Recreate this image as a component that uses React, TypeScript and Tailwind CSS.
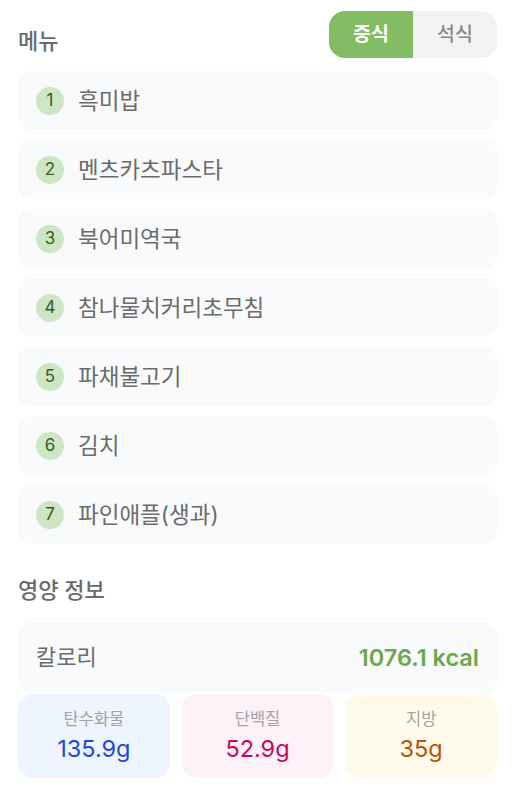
import React from "react";

const menus = ["흑미밥", "멘츠카츠파스타", "북어미역국", "참나물치커리초무침", "파채불고기", "김치", "파인애플(생과)"];

export default function App() {
  return (
    <div
      className="w-[517px] min-h-[792px] bg-white pl-[18px] pr-[20px] pt-[11px]"
      style={{ fontFamily: '"Inter", "Noto Sans CJK KR", sans-serif' }}
    >
      <div className="flex items-end justify-between">
        <div className="text-[22px] leading-[33px] font-medium text-[#6b6b6b]">메뉴</div>
        <div className="flex h-[47px] w-[168px] overflow-hidden rounded-[16px] bg-[#f2f3f5]">
          <div className="flex w-[84px] items-center justify-center bg-[#83bd63] text-[19.5px] font-semibold text-white">중식</div>
          <div className="flex w-[84px] items-center justify-center text-[19.5px] font-medium text-[#8a8a8a]">석식</div>
        </div>
      </div>
      <div className="mt-[13px] flex flex-col gap-[10px]">
        {menus.map((m, i) => (
          <div key={i} className="flex h-[59px] items-center rounded-[12px] bg-[#f9fafb] pl-[18px]">
            <div className="flex h-[28px] w-[28px] items-center justify-center rounded-full bg-[#cde6c3] text-[17px] text-[#3d5a2a]">
              {i + 1}
            </div>
            <div className="ml-[14px] text-[22.5px] text-[#6b6b6b]">{m}</div>
          </div>
        ))}
      </div>
      <div className="mt-[30px] text-[22px] leading-[33px] font-medium text-[#6b6b6b]">영양 정보</div>
      <div className="mt-[15px] flex h-[71px] items-center justify-between rounded-[14px] bg-[#f9fafb] px-[18px]">
        <div className="text-[22px] text-[#6b6b6b]">칼로리</div>
        <div className="text-[23.5px] font-semibold text-[#6aa84a]">1076.1 kcal</div>
      </div>
      <div className="mt-[1px] grid grid-cols-3 gap-[12px]">
        <div className="flex h-[84px] flex-col items-center justify-center gap-[2px] rounded-[14px] bg-[#eef5ff]">
          <div className="text-[16.5px] leading-[24px] text-[#a3a3a3]">탄수화물</div>
          <div className="text-[23.5px] leading-[32px] text-[#1c46e0]">135.9g</div>
        </div>
        <div className="flex h-[84px] flex-col items-center justify-center gap-[2px] rounded-[14px] bg-[#fdf2f8]">
          <div className="text-[16.5px] leading-[24px] text-[#a3a3a3]">단백질</div>
          <div className="text-[23.5px] leading-[32px] text-[#c8065f]">52.9g</div>
        </div>
        <div className="flex h-[84px] flex-col items-center justify-center gap-[2px] rounded-[14px] bg-[#fffbeb]">
          <div className="text-[16.5px] leading-[24px] text-[#a3a3a3]">지방</div>
          <div className="text-[23.5px] leading-[32px] text-[#b9520a]">35g</div>
        </div>
      </div>
    </div>
  );
}
